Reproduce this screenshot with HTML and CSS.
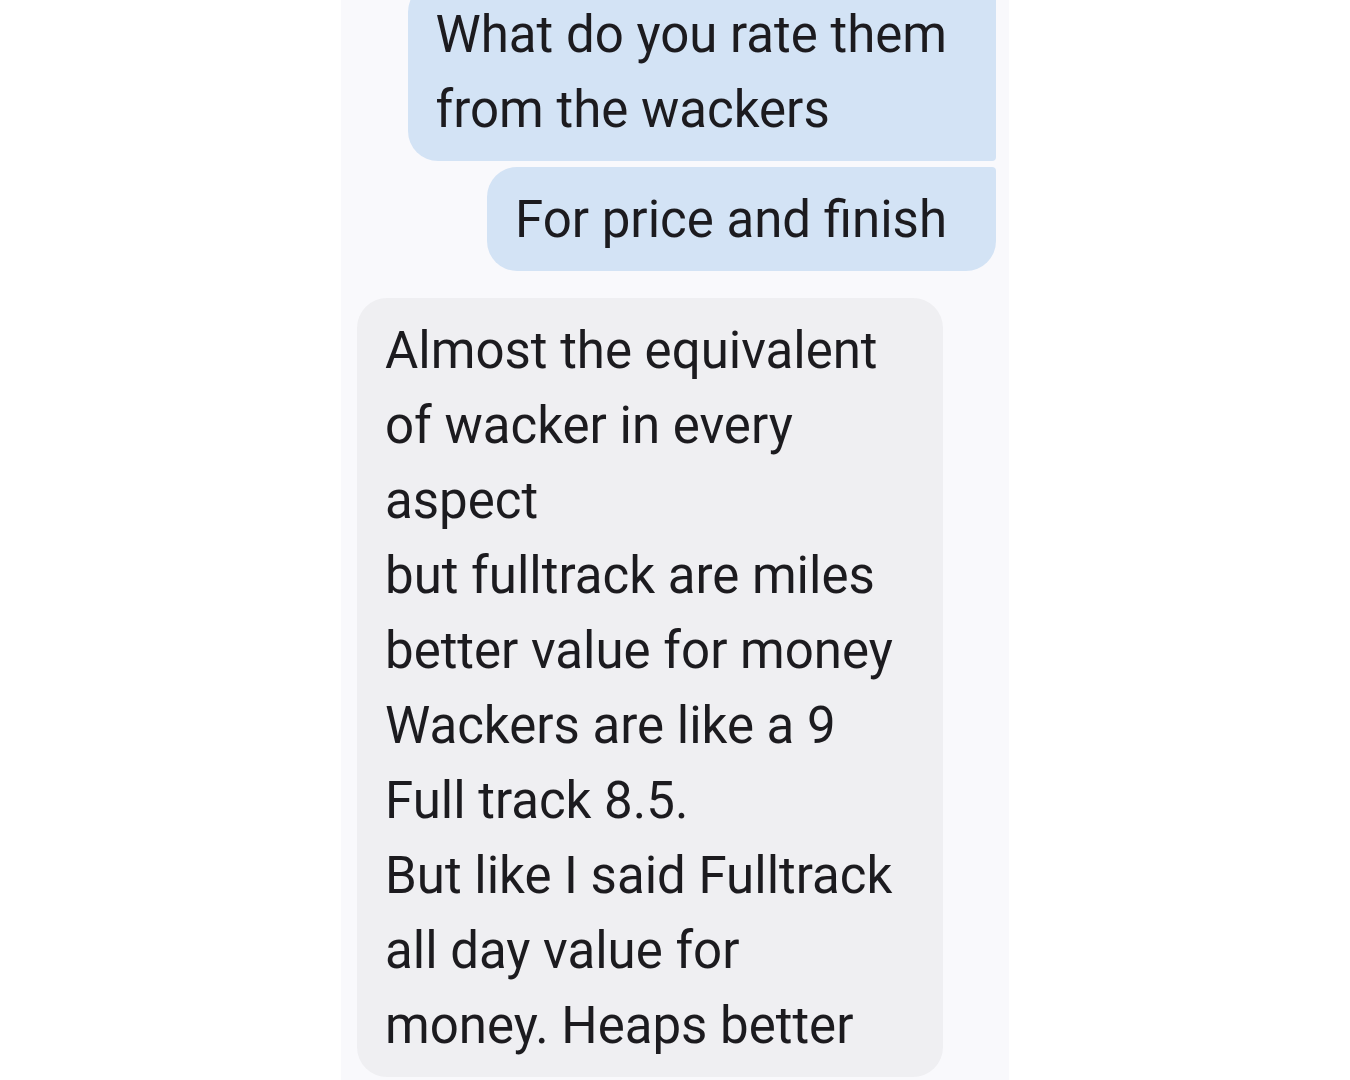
FILE: index.html
```html
<!DOCTYPE html>
<html lang="en">
<head>
  <meta charset="UTF-8" />
  <title>Messages</title>
  <link rel="stylesheet" href="styles.css">
</head>
<body>

  <div class="thread">
    <div class="msg sent first">
      What do you rate them<br>
      from the wackers
    </div>
    <div class="msg sent last">
      For price and finish
    </div>

    <div class="msg received">
      Almost the equivalent<br>
      of wacker in every<br>
      aspect<br>
      but fulltrack are miles<br>
      better value for money<br>
      Wackers are like a 9<br>
      Full track 8.5.<br>
      But like I said Fulltrack<br>
      all day value for<br>
      money. Heaps better
    </div>
  </div>

</body>
</html>
```

FILE: styles.css
```css
body {
  font-family: Roboto, 'Noto Sans', sans-serif;
  background: #fff;
  margin: 0;
  overflow: hidden;
}
.thread {
  width: 668px;
  height: 1120px;
  margin: -18px auto 0;
  background: #f9f9fc;
  display: flex;
  flex-direction: column;
  padding: 0 13px 0 16px;
  box-sizing: border-box;
}
.msg {
  font-size: 51px;
  line-height: 75px;
  color: #1c1b1f;
  padding: 15px 28px 14px;
}
.sent {
  align-self: flex-end;
  background: #d3e3f5;
  padding-right: 49px;
}
.sent.first {
  border-radius: 30px 4px 4px 30px;
}
.sent.last {
  margin-top: 6px;
  border-radius: 30px 4px 30px 30px;
}
.received {
  align-self: flex-start;
  background: #efeff2;
  border-radius: 30px;
  margin-top: 27px;
  width: 586px;
  box-sizing: border-box;
}
```
